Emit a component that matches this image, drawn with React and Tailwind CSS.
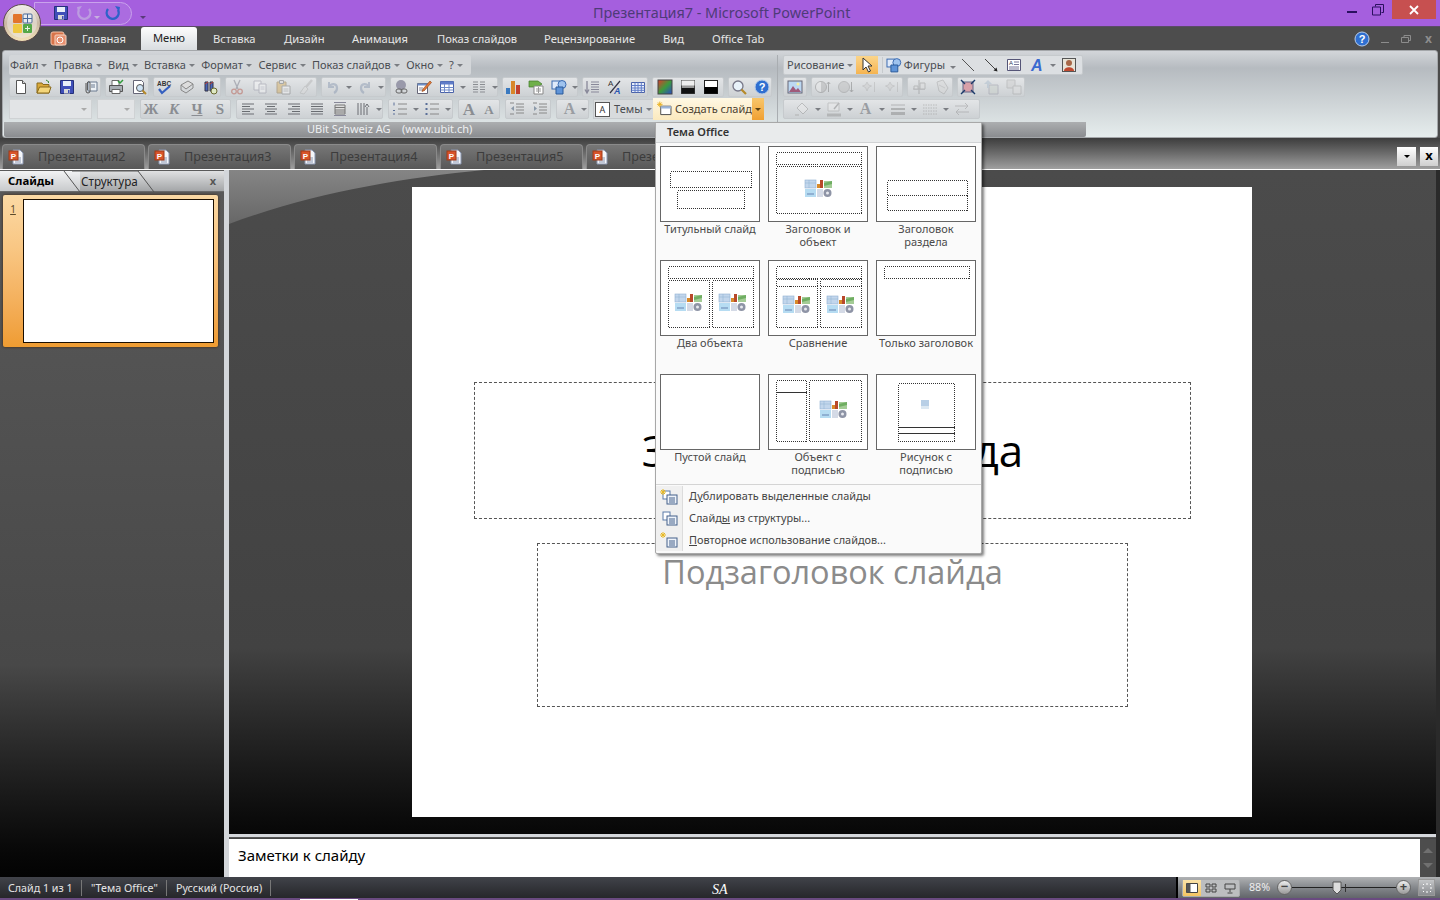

import React from "react";

const S = ({ children, off, w = 16, h = 16 }) => (
    <svg viewBox={`0 0 ${w} ${h}`} width={w} height={h} className={off ? "opacity-40" : ""}>{children}</svg>
);

const icons = {
    doc: <><path d="M3.5 1.5h6l3 3v10h-9z" fill="#fff" stroke="#555" /><path d="M9.5 1.5v3h3" fill="#ddd" stroke="#555" /></>,
    open: <><path d="M1 4h5l1 1.5h6V14H1z" fill="#d9a93a" stroke="#8a6a1c" /><path d="M1 14l2.5-6H15l-2 6z" fill="#f4d67a" stroke="#8a6a1c" /><path d="M10 1l3 2-1 1" fill="none" stroke="#3b8a3b" /></>,
    save: <><path d="M1.5 1.5h13v13h-13z" fill="#3f4fb8" stroke="#25307a" /><path d="M4 2h8v5H4z" fill="#e8eef8" /><path d="M5 10h6v4.5H5z" fill="#d8d8d8" /><path d="M9 11h1.5v3H9z" fill="#3f4fb8" /></>,
    mailclip: <><path d="M6 3h9v9H6z" fill="#eef2f6" stroke="#6a7a90" /><path d="M9 6h4M9 8h4" stroke="#6a7a90" /><path d="M4 4v8a2 2 0 0 0 4 0V4a1.3 1.3 0 0 0-2.6 0v7" fill="none" stroke="#555" /></>,
    print: <><path d="M4 1.5h7v5H4z" fill="#fff" stroke="#666" /><path d="M1.5 6.5h13v6h-13z" fill="#a8adb3" stroke="#555" /><path d="M4 10.5h8v4H4z" fill="#fff" stroke="#666" /><path d="M10 2l2 2 3-3" fill="none" stroke="#2f9a3a" strokeWidth="1.5" /></>,
    preview: <><path d="M2.5 1.5h8l2 2v11h-10z" fill="#fff" stroke="#667" /><circle cx="9" cy="9" r="3.5" fill="#cfe4f6" stroke="#555" /><path d="M11.5 11.5l3.5 3.5" stroke="#b58a2a" strokeWidth="2" /></>,
    spell: <><text x="1" y="7" fontSize="6.5" fontWeight="700" fill="#333" fontFamily="Liberation Sans, sans-serif">ABC</text><path d="M3 10l3 4 8-7" fill="none" stroke="#3560c0" strokeWidth="2.2" /></>,
    book: <><path d="M2 6l7-4 5 3-7 5z" fill="#ddd" stroke="#888" /><path d="M2 6v5l5 3 7-5V5" fill="none" stroke="#888" /></>,
    binoc: <><path d="M3 3h3v9H3zM8 3h3v9H8z" fill="#4a66b8" stroke="#334" /><path d="M3 5l3-2M8 5l3-2" stroke="#c04030" /><circle cx="12" cy="12" r="3" fill="#dfe9c4" stroke="#6a6a30" /></>,
    cut: <><path d="M5 1l4 9M11 1L7 10" stroke="#667" strokeWidth="1.3" /><circle cx="5" cy="12.5" r="2.3" fill="none" stroke="#b04030" strokeWidth="1.3" /><circle cx="11" cy="12.5" r="2.3" fill="none" stroke="#b04030" strokeWidth="1.3" /></>,
    copy: <><path d="M2 2h7v9H2z" fill="#fff" stroke="#889" /><path d="M7 5h7v9H7z" fill="#fff" stroke="#889" /><path d="M8.5 8h4M8.5 10h4" stroke="#aab" /></>,
    paste: <><path d="M2 3h9v11H2z" fill="#d6a545" stroke="#80602a" /><path d="M4.5 1.5h4v3h-4z" fill="#ddd" stroke="#555" /><path d="M7 7h8v8H7z" fill="#fff" stroke="#666" /><path d="M8.5 10h5M8.5 12h5" stroke="#999" /></>,
    brush: <><path d="M14 1L8 8" stroke="#aaa" strokeWidth="2.5" /><path d="M7 7l3 3-4 5-4-1z" fill="#ddd" stroke="#aaa" /></>,
    undo: <><path d="M4 3v5h5" fill="none" stroke="#7b8ca8" strokeWidth="2" /><path d="M4 8c2-4 8-4 8 1 0 2-1 4-3 5" fill="none" stroke="#7b8ca8" strokeWidth="2.2" /></>,
    redo: <><path d="M12 3v5H7" fill="none" stroke="#7b8ca8" strokeWidth="2" /><path d="M12 8C10 4 4 4 4 9c0 2 1 4 3 5" fill="none" stroke="#7b8ca8" strokeWidth="2.2" /></>,
    qatUndo: <><path d="M13 4a6 6 0 1 1-10 1" fill="none" stroke="#bc9ce0" strokeWidth="2.4" /><path d="M6 1L1 2l1 5z" fill="#bc9ce0" /></>,
    qatRedo: <><path d="M3 4a6 6 0 1 0 10 1" fill="none" stroke="#2f62c8" strokeWidth="2.4" /><path d="M10 1l5 1-1 5z" fill="#2f62c8" /></>,
    link: <><circle cx="8" cy="6" r="5" fill="#99a" /><rect x="3" y="10" width="6" height="4" rx="2" fill="none" stroke="#666" /><rect x="8" y="10" width="6" height="4" rx="2" fill="none" stroke="#666" /></>,
    edit: <><path d="M1.5 4.5h10v10h-10z" fill="#fff" stroke="#667" /><path d="M1.5 4.5h10v2h-10z" fill="#6f90c8" /><path d="M3 9h4M3 11h6" stroke="#889" /><path d="M7 10l7-8 1.5 1.5-7 8-2.5 1z" fill="#e07a3a" stroke="#904010" strokeWidth=".6" /></>,
    table: <><path d="M1.5 2.5h13v11h-13z" fill="#fff" stroke="#4a62a8" /><path d="M1.5 2.5h13v3h-13z" fill="#5f7cc8" /><path d="M1.5 8.5h13M1.5 11h13M5.5 5v8.5M10 5v8.5" stroke="#6f8ac8" /></>,
    cols: <><path d="M2 3h5M2 5.5h5M2 8h5M2 10.5h5M2 13h5M9 3h5M9 5.5h5M9 8h5M9 10.5h5M9 13h5" stroke="#8a8d92" /></>,
    chart: <><path d="M1 9h4v6H1z" fill="#3a7ac0" /><path d="M6 2h4v13H6z" fill="#d8862a" /><path d="M11 6h4v9h-4z" fill="#c04030" /></>,
    sheet: <><path d="M1 2h9l4 3-4 3H1z" fill="#6fb04a" stroke="#3f7a2a" strokeWidth=".7" /><path d="M6 7h9v8H6z" fill="#fff" stroke="#888" /><path d="M8 10h5M8 12h5M10.5 8v6" stroke="#999" /></>,
    shapes: <><rect x="1" y="2" width="8" height="8" fill="#dfeafa" stroke="#3a6ab0" /><circle cx="11" cy="5.5" r="4" fill="#9fc3ee" stroke="#3a6ab0" /><path d="M5 8h7v7H5z" fill="#5f94d8" stroke="#2a5a9a" /></>,
    linespace: <><path d="M3 2v11M1 10.5L3 14l2-3.5" fill="none" stroke="#889" strokeWidth="1.3" /><path d="M7 3h8M7 5.5h8M7 8h8M7 10.5h8M7 13h8" stroke="#889" /></>,
    az: <><text x="1" y="7" fontSize="8" fontFamily="Liberation Sans, sans-serif" fill="#333">A</text><path d="M3 14L13 2" stroke="#334" strokeWidth="1.2" /><text x="7" y="15" fontSize="9" fontWeight="700" fontStyle="italic" fontFamily="Liberation Sans, sans-serif" fill="#2a55b0">A</text></>,
    grid: <><path d="M1.5 3.5h13v10h-13z" fill="#eaf0fa" stroke="#4a62a8" /><path d="M1.5 6.5h13M1.5 9h13M1.5 11.3h13M5 3.5v10M8 3.5v10M11.3 3.5v10" stroke="#5f7cc8" /></>,
    color: <><defs><linearGradient id="cg" x1="0" y1="0" x2="1" y2="1"><stop offset="0" stopColor="#e0392b" /><stop offset=".5" stopColor="#3d9a3d" /><stop offset="1" stopColor="#2a4ac8" /></linearGradient></defs><rect x="1" y="1" width="14" height="14" fill="url(#cg)" stroke="#444" /></>,
    gray: <><rect x="1.5" y="1.5" width="13" height="13" fill="#999" stroke="#444" /><rect x="1.5" y="1.5" width="13" height="5" fill="#eee" /><rect x="1.5" y="9" width="13" height="5.5" fill="#111" /></>,
    bw: <><rect x="1.5" y="1.5" width="13" height="13" fill="#fff" stroke="#222" /><rect x="1.5" y="8" width="13" height="6.5" fill="#000" /></>,
    zoom: <><circle cx="7" cy="7" r="5" fill="#e8f2fa" stroke="#778" strokeWidth="1.3" /><path d="M10.5 10.5L15 15" stroke="#b58a2a" strokeWidth="2.2" /></>,
    help: <><circle cx="8" cy="8" r="7" fill="#2f6fd0" stroke="#b8cdea" /><text x="8" y="12" fontSize="11" fontWeight="700" textAnchor="middle" fontFamily="Liberation Sans, sans-serif" fill="#fff">?</text></>,
    left: <path d="M2 3h12M2 5.5h8M2 8h12M2 10.5h8M2 13h12" stroke="#6a6d72" />,
    center: <path d="M2 3h12M4 5.5h8M2 8h12M4 10.5h8M2 13h12" stroke="#6a6d72" />,
    right: <path d="M2 3h12M6 5.5h8M2 8h12M6 10.5h8M2 13h12" stroke="#6a6d72" />,
    justify: <path d="M2 3h12M2 5.5h12M2 8h12M2 10.5h12M2 13h12" stroke="#6a6d72" />,
    distrib: <><path d="M2 1.5h12M2 14.5h12" stroke="#889" /><path d="M3 4h10v9H3z" fill="#ddd" stroke="#777" /><path d="M3 6.5h10M3 9h10M3 11h10" stroke="#777" /></>,
    vert: <path d="M3 2v12M6 2v12M9 2v12M12 6v8M14 6l-2-3-2 3" fill="none" stroke="#6a6d72" />,
    num: <><path d="M6 3h9M6 8h9M6 13h9" stroke="#888" /><path d="M2 1.5v3M1 9.5h2M1 13h2" stroke="#5a6f98" /></>,
    bull: <><path d="M6 3h9M6 8h9M6 13h9" stroke="#888" /><path d="M1.5 2h2v2h-2zM1.5 7h2v2h-2zM1.5 12h2v2h-2z" fill="#5a6f98" /></>,
    indL: <><path d="M7 3h8M7 6h8M7 9h8M7 12h8" stroke="#888" /><path d="M5 5L2 7.5 5 10z" fill="#8a98a8" /><path d="M1 2h4M1 13h4" stroke="#888" /></>,
    indR: <><path d="M7 3h8M7 6h8M7 9h8M7 12h8" stroke="#888" /><path d="M2 5l3 2.5L2 10z" fill="#8a98a8" /><path d="M1 2h4M1 13h4" stroke="#888" /></>,
    newSlide: <><path d="M4 5h11v9H4z" fill="#fff" stroke="#444" /><path d="M4 5h11v2.5H4z" fill="#9cb5d8" /><path d="M3 0v6M0 3h6M1 1l4 4M5 1L1 5" stroke="#e8b020" /></>,
    cursor: <path d="M4 1l0 12 3-3 2.5 5 2-1-2.5-5h4z" fill="#fff" stroke="#333" />,
    line: <path d="M2 2l12 12" stroke="#555" />,
    arrowLine: <><path d="M2 2l11 11" stroke="#444" /><path d="M14.5 14.5l-4-1 3-3z" fill="#222" /></>,
    textbox: <><path d="M1.5 2.5h13v11h-13z" fill="#fff" stroke="#557" /><text x="3" y="8" fontSize="6" fill="#335" fontFamily="Liberation Sans, sans-serif">A</text><path d="M8 5h5M8 7.5h5M3 10h10M3 12h10" stroke="#779" /></>,
    wordart: <><text x="2" y="14" fontSize="16" fontWeight="700" fontStyle="italic" fontFamily="Liberation Sans, sans-serif" fill="#3a6ad0">A</text></>,
    clipart: <><rect x="1.5" y="1.5" width="13" height="13" fill="#e8e4d8" stroke="#555" /><circle cx="8" cy="6" r="3" fill="#a86848" /><path d="M3 14c0-5 10-5 10 0z" fill="#c04a30" /></>,
    picture: <><rect x="1" y="2" width="14" height="12" fill="#bcd8f2" stroke="#667" /><path d="M2 13l4-6 3 4 2-2 3 4z" fill="#a05a7a" /><circle cx="11" cy="5" r="1.5" fill="#f4f0a0" /></>,
    circUp: <><circle cx="6" cy="8" r="5.5" fill="#aaa" stroke="#777" /><path d="M6 3a5 5 0 0 0 0 10z" fill="#eee" /><path d="M13.5 13V3M11.8 5l1.7-2 1.7 2" fill="none" stroke="#666" /></>,
    circDn: <><circle cx="6" cy="8" r="5.5" fill="#b8b8b8" stroke="#888" /><path d="M13.5 3v10M11.8 11l1.7 2 1.7-2" fill="none" stroke="#666" /></>,
    spark: <><path d="M6 3l1.5 3 3 1-3 1.5L6 12l-1.5-3.5-3-1.5 3-1z" fill="#ccc" stroke="#aaa" /><path d="M13.5 13V3" stroke="#aaa" /></>,
    align: <><path d="M8 1v14M2 10h12" stroke="#777" /><path d="M3 7h4v3H3zM9 4h5v6H9z" fill="#ddd" stroke="#888" /></>,
    hand: <><path d="M3 3l6-2 5 8-4 6-5-3z" fill="#d8d8d8" stroke="#999" /><path d="M5 6l6 3" stroke="#aaa" /></>,
    crop: <><path d="M3 3h10v10H3z" fill="#d8a0a8" stroke="#668" /><path d="M1 1l4 4M15 1l-4 4M1 15l4-4M15 15l-4-4" stroke="#1a3a6a" strokeWidth="1.4" /></>,
    back: <><path d="M6 6h9v9H6z" fill="#c8d0c8" stroke="#889" /><path d="M5 1L1 5h3v4h2V5h3z" fill="#9fb4c8" /></>,
    stack: <><path d="M1 1h8v8H1z" fill="#ccc" stroke="#999" /><path d="M7 7h8v8H7z" fill="#ddd" stroke="#999" /></>,
    fill: <><path d="M3 7l5-5 6 6-5 5z" fill="#eee" stroke="#888" /><path d="M1 14h4" stroke="#aaa" strokeWidth="2" /></>,
    pen: <><path d="M2 2h11v8H2z" fill="#eee" stroke="#999" /><path d="M8 8l5-6" stroke="#777" strokeWidth="1.5" /><path d="M1 12.5h14v3H1z" fill="#888" /></>,
    thick: <><path d="M1 4h14" stroke="#777" /><path d="M1 8h14" stroke="#777" strokeWidth="2" /><path d="M1 12.5h14" stroke="#777" strokeWidth="3" /></>,
    dash: <path d="M1 4h14M1 7h14M1 10h14M1 13h14" stroke="#888" strokeDasharray="1.5 1" />,
    swap: <><path d="M1 5h13M11 2l3 3-3 3" fill="none" stroke="#888" /><path d="M15 11H2M5 8l-3 3 3 3" fill="none" stroke="#888" /></>,
};

const Down = ({ c = "border-t-[#7a7d82]" }) => (
    <span className={`inline-block w-0 h-0 border-x-[3px] border-x-transparent border-t-[3px] ${c}`} />
);

// one toolbar cell, "v" marks a small drop arrow
const Cell = ({ n, off }) => n === "v" ? (
    <span className="w-[9px] flex items-center justify-center shrink-0"><Down /></span>
) : (
    <span className="w-[23px] flex items-center justify-center shrink-0"><S off={off}>{icons[n]}</S></span>
);

const Group = ({ className = "", items = [], off, children }) => (
    <div className={`h-full flex items-center justify-center rounded-[2px] border border-[#c6cacd] bg-gradient-to-b from-[#e3e5e7] to-[#cdd1d4] shrink-0 ${className}`}>
        {items.map((n, i) => <Cell key={i} n={n} off={off} />)}
        {children}
    </div>
);

const Fmt = ({ children, className = "" }) => (
    <span className={`w-[23px] text-center text-[15px] leading-none font-bold text-[#8a8d92] shrink-0 ${className}`}>{children}</span>
);

const menus = ["Файл", "Правка", "Вид", "Вставка", "Формат", "Сервис", "Показ слайдов", "Окно", "?"];
const ribbonTabs = ["Вставка", "Дизайн", "Анимация", "Показ слайдов", "Рецензирование", "Вид", "Office Tab"];
const docs = ["Презентация2", "Презентация3", "Презентация4", "Презентация5", "Презентация6"];

const PptIcon = () => (
    <svg viewBox="0 0 16 16" width="16" height="16">
        <path d="M5 1h7l3 3v11H5z" fill="#f4f6fa" stroke="#8a96b0" />
        <path d="M7 9h6M7 11h6M7 13h6" stroke="#8a96b0" />
        <rect x="1" y="2" width="9" height="9" fill="#d8542a" stroke="#a03a18" />
        <text x="5.5" y="9.5" fontSize="8" fontWeight="700" textAnchor="middle" fill="#fff" fontFamily="Liberation Sans, sans-serif">P</text>
    </svg>
);

const OfficeButton = () => (
    <svg viewBox="0 0 40 40" width="40" height="40" className="absolute left-[2px] top-[3px] z-30">
        <defs>
            <linearGradient id="ob" x1="0" y1="0" x2="0" y2="1">
                <stop offset="0" stopColor="#f4f0ee" /><stop offset=".5" stopColor="#c9b8a4" /><stop offset="1" stopColor="#f3e2b8" />
            </linearGradient>
        </defs>
        <circle cx="20" cy="20" r="18.5" fill="url(#ob)" stroke="#5b4a4a" />
        <circle cx="20" cy="20" r="15" fill="#f0ece6" opacity=".5" />
        <rect x="11" y="11" width="9" height="9" rx="1" fill="#e2752c" />
        <rect x="21" y="11" width="9" height="9" rx="1" fill="#e8ebef" stroke="#4a6a9a" />
        <path d="M21 15.5h9M25.5 11v9" stroke="#4a6a9a" />
        <rect x="11" y="21" width="9" height="9" rx="1" fill="#efc840" />
        <rect x="21" y="21" width="9" height="9" rx="1" fill="#54a848" />
        <path d="M23 25.5h5M25.5 23v5" stroke="#e8f4e0" />
    </svg>
);

// small picture of the content placeholder used by the layout thumbnails
const Placeholder = ({ x, y, small }) => small ? (
    <g transform={`translate(${x} ${y})`}>
        <rect width="8" height="9" fill="#b8cfe6" />
        <rect y="6" width="8" height="3" fill="#dce8f2" />
    </g>
) : (
    <g transform={`translate(${x} ${y})`}>
        <rect width="11" height="8" fill="#c2d6ec" stroke="#8fb0d2" strokeWidth=".6" />
        <path d="M0 3h11M4 0v8" stroke="#8fb0d2" strokeWidth=".5" />
        <path d="M12 4h3v4h-3z" fill="#d88a2a" /><path d="M15 0h3v8h-3z" fill="#b8482a" />
        <path d="M19 1h8v7h-8z" fill="#a4cc96" /><path d="M19 3l8-2v3l-8 2z" fill="#6fae62" />
        <rect y="9" width="11" height="8" fill="#b6dcf2" />
        <rect x="2" y="13" width="7" height="2" fill="#8fb0d2" />
        <rect x="12" y="9" width="6" height="8" fill="#d4dae6" />
        <circle cx="22.5" cy="13" r="4" fill="#8e94a6" />
        <circle cx="22.5" cy="13" r="1.5" fill="#e8eaf0" />
    </g>
);

const D = ({ x, y, w, h }) => (
    <rect x={x + .5} y={y + .5} width={w} height={h} fill="none" stroke="#333" strokeWidth="1" strokeDasharray="1 1" shapeRendering="crispEdges" />
);

const layouts = [
    { t: "Титульный слайд", b: <><D x={10} y={25} w={81} h={16} /><D x={17} y={44} w={67} h={18} /></> },
    { t: "Заголовок и объект", b: <><D x={8} y={6} w={85} h={12} /><D x={8} y={20} w={85} h={47} /><Placeholder x={37} y={34} /></> },
    { t: "Заголовок раздела", b: <><D x={11} y={34} w={80} h={15} /><D x={11} y={49} w={80} h={15} /></> },
    { t: "Два объекта", b: <><D x={8} y={6} w={85} h={12} /><D x={8} y={20} w={41} h={47} /><D x={52} y={20} w={41} h={47} /><Placeholder x={15} y={34} /><Placeholder x={59} y={34} /></> },
    { t: "Сравнение", b: <><D x={8} y={6} w={85} h={12} /><D x={8} y={19} w={41} h={7} /><D x={52} y={19} w={41} h={7} /><D x={8} y={26} w={41} h={41} /><D x={52} y={26} w={41} h={41} /><Placeholder x={15} y={36} /><Placeholder x={59} y={36} /></> },
    { t: "Только заголовок", b: <D x={8} y={6} w={85} h={12} /> },
    { t: "Пустой слайд", b: null },
    { t: "Объект с подписью", b: <><D x={8} y={6} w={30} h={12} /><D x={8} y={18} w={30} h={49} /><D x={41} y={6} w={52} h={61} /><Placeholder x={52} y={27} /></> },
    { t: "Рисунок с подписью", b: <><D x={22} y={9} w={56} h={44} /><D x={22} y={53} w={56} h={6} /><D x={22} y={59} w={56} h={8} /><Placeholder x={45} y={26} small /></> },
];

const menuRows = [
    { i: "a", t: <>Д<u>у</u>блировать выделенные слайды</> },
    { i: "b", t: <>Слайд<u>ы</u> из структуры...</> },
    { i: "c", t: <><u>П</u>овторное использование слайдов...</> },
];

const MenuIcon = ({ k }) => (
    <svg viewBox="0 0 18 16" width="18" height="16">
        {k !== "c" && <rect x="3" y="2" width="7" height="8" fill="#fff" stroke="#5a7aa8" />}
        <rect x="7" y="6" width="10" height="9" fill="#eef3fa" stroke="#44608a" />
        <path d="M9 9h6M9 11h6M9 13h6" stroke="#44608a" />
        {k !== "b" && <path d="M3 0v6M0 3h6M1 1l4 4M5 1L1 5" stroke="#e8b820" />}
    </svg>
);

const NewSlideMenu = () => (
    <div className="absolute left-[655px] top-[122px] w-[327px] h-[432px] z-20 bg-[#fafafa] border border-[#a8a8a8] rounded-[2px] shadow-[2px_2px_3px_rgba(0,0,0,0.5)] flex flex-col font-['Noto_Sans',sans-serif]">
        <div className="h-[20px] shrink-0 bg-[#e9ebec] border-b border-[#d0d2d4] pl-[11px] text-[11px] leading-[17px] font-semibold text-[#333]">Тема Office</div>
        <div className="grid grid-cols-[100px_100px_100px] gap-x-[8px] grid-rows-[114px_114px_110px] pl-[4px] pt-[3px] h-[341px] shrink-0">
            {layouts.map((l) => (
                <div key={l.t} className="flex flex-col items-center">
                    <div className="w-[100px] h-[76px] bg-white border border-[#666] shrink-0">
                        <svg viewBox="1 1 98 74" width="98" height="74" className="block">{l.b}</svg>
                    </div>
                    <div className="w-[100px] text-center text-[11px] leading-[13px] text-[#4a4a4a]">{l.t}</div>
                </div>
            ))}
        </div>
        <div className="flex-1 border-t border-[#d4d4d4] flex flex-col">
            {menuRows.map((r, i) => (
                <div key={r.i} className={`h-[22px] flex items-center ${i === 0 ? "pt-[1px]" : ""}`}>
                    <span className="w-[27px] h-full flex items-center justify-center bg-[#f0f0f0] border-r border-[#dcdcdc] shrink-0"><MenuIcon k={r.i} /></span>
                    <span className="ml-[6px] text-[10.9px] text-[#444]">{r.t}</span>
                </div>
            ))}
        </div>
    </div>
);

const Ribbon = () => (
    <div className="h-[88px] mx-[2px] shrink-0 rounded-[3px] border border-[#a4a7aa] bg-gradient-to-b from-[#d3d6da] via-[#b6bbc0] via-[20%] to-[#e6eded] font-['Noto_Sans',sans-serif] text-[11px] text-[#4a4d52] flex flex-col">
        <div className="w-[1084px] h-[71px] flex pt-[4px]">
            <div className="w-[775px] border-r border-[#a9adb1] pl-[6px] flex flex-col shrink-0">
                <div className="h-[20px] w-[462px] flex items-center gap-[6.4px] bg-[#d3d6d9] rounded-[2px] pl-[1px]">
                    {menus.map((m) => (
                        <span key={m} className="flex items-center gap-[3px] whitespace-nowrap">{m}<Down /></span>
                    ))}
                </div>
                <div className="h-[22px] mt-[1px] flex gap-[4px] py-[1px]">
                    <Group className="w-[92px]" items={["doc", "open", "save", "mailclip"]} />
                    <Group className="w-[44px]" items={["print", "preview"]} />
                    <Group className="w-[68px]" items={["spell", "book", "binoc"]} />
                    <Group className="w-[92px]" items={["cut", "copy", "paste", "brush"]} off />
                    <Group className="w-[65px]" items={["undo", "v", "redo", "v"]} off />
                    <Group className="w-[108px]" items={["link", "edit", "table", "v", "cols", "v"]} />
                    <Group className="w-[76px]" items={["chart", "sheet", "shapes", "v"]} />
                    <Group className="w-[66px]" items={["linespace", "az", "grid"]} />
                    <Group className="w-[72px]" items={["color", "gray", "bw"]} />
                    <Group className="w-[44px]" items={["zoom", "help"]} />
                </div>
                <div className="h-[22px] flex gap-[5px] py-[1px]">
                    <div className="w-[83px] h-full bg-[#e2e4e6] border border-[#cfd2d4] flex items-center justify-end pr-[4px]"><Down c="border-t-[#aaa]" /></div>
                    <div className="w-[38px] h-full bg-[#e2e4e6] border border-[#cfd2d4] flex items-center justify-end pr-[4px]"><Down c="border-t-[#aaa]" /></div>
                    <Group className="w-[91px] font-['Liberation_Serif',serif]">
                        <Fmt>Ж</Fmt><Fmt className="italic">К</Fmt><Fmt className="underline">Ч</Fmt><Fmt>S</Fmt>
                    </Group>
                    <Group className="w-[147px]" items={["left", "center", "right", "justify", "distrib", "vert", "v"]} />
                    <Group className="w-[65px]" items={["num", "v", "bull", "v"]} />
                    <Group className="w-[42px]">
                        <span className="font-['Liberation_Serif',serif] font-bold text-[17px] leading-none text-[#8a8d92] w-[20px] text-center">A</span>
                        <span className="font-['Liberation_Serif',serif] font-bold text-[13px] leading-none text-[#8a8d92] w-[20px] text-center">A</span>
                    </Group>
                    <Group className="w-[46px]" items={["indL", "indR"]} />
                    <Group className="w-[33px]">
                        <span className="font-['Liberation_Serif',serif] font-bold text-[16px] leading-none text-[#9a9da2] w-[22px] text-center">A</span><Down />
                    </Group>
                    <div className="h-[22px] flex items-center ml-[-1px] -mt-[1px]">
                        <div className="w-[60px] h-[20px] flex items-center gap-[4px] pl-[1px] border border-[#c6cacd] bg-[#d8dbdd] border-r-0">
                            <span className="w-[15px] h-[15px] bg-white border border-[#555] text-[9px] leading-[13px] text-center text-[#333] shrink-0">A</span>
                            <span className="flex items-center gap-[3px]">Темы<Down /></span>
                        </div>
                        <div className="w-[99px] h-[22px] flex items-center gap-[3px] pl-[4px] bg-gradient-to-b from-[#fff8e4] to-[#fbe9bd] text-[#4a4030]">
                            <S>{icons.newSlide}</S><span className="whitespace-nowrap">Создать слайд</span>
                        </div>
                        <div className="w-[12px] h-[22px] flex items-center justify-center bg-gradient-to-b from-[#f8c66a] to-[#f0a030]"><Down c="border-t-[#5a4010]" /></div>
                    </div>
                </div>
            </div>
            <div className="flex-1 pl-[5px] flex flex-col">
                <div className="h-[20px] w-[300px] flex items-center bg-[#dcdfe2] rounded-[2px] border border-[#c6cacd]">
                    <span className="flex items-center gap-[3px] w-[72px] pl-[3px]">Рисование<Down /></span>
                    <span className="w-[22px] h-full flex items-center justify-center bg-gradient-to-b from-[#fbd58a] to-[#f5b450] shrink-0"><S>{icons.cursor}</S></span>
                    <span className="w-[74px] flex items-center gap-[2px] pl-[3px] border-l border-[#c6cacd] ml-[4px]"><S>{icons.shapes}</S>Фигуры<span className="ml-[3px]"><Down /></span></span>
                    <Cell n="line" /><Cell n="arrowLine" /><Cell n="textbox" /><Cell n="wordart" /><Cell n="v" /><Cell n="clipart" />
                </div>
                <div className="h-[22px] mt-[1px] flex gap-[4px] py-[1px]">
                    <Group className="w-[24px]" items={["picture"]} />
                    <Group className="w-[92px]" items={["circUp", "circDn", "spark", "spark"]} off />
                    <Group className="w-[46px]" items={["align", "hand"]} off />
                    <Group className="w-[68px]">
                        <Cell n="crop" /><Cell n="back" off /><Cell n="stack" off />
                    </Group>
                </div>
                <div className="h-[22px] flex py-[1px]">
                    <Group className="w-[197px]">
                        <Cell n="fill" off /><Cell n="v" />
                        <Cell n="pen" off /><Cell n="v" />
                        <span className="w-[23px] text-center font-['Liberation_Serif',serif] font-bold text-[16px] leading-none text-[#9a9da2]">A</span><Cell n="v" />
                        <Cell n="thick" off /><Cell n="v" />
                        <Cell n="dash" off /><Cell n="v" />
                        <Cell n="swap" off />
                    </Group>
                </div>
            </div>
        </div>
        <div className="w-[1082px] h-[15px] ml-[1px] bg-gradient-to-b from-[#acaeb0] to-[#8b8d90] rounded-b-[2px] pl-[303px] text-[11px] leading-[14px] text-[#eef0f2] whitespace-pre">UBit Schweiz AG    (www.ubit.ch)</div>
    </div>
);

const SidePane = () => (
    <aside className="w-[224px] shrink-0 bg-gradient-to-b from-[#5a5a5a] via-[#484848] via-[70%] to-[#030303] flex flex-col">
        <div className="h-[21px] mt-[1px] shrink-0 relative bg-gradient-to-b from-[#e0e1e2] to-[#a4a6a8] border-b border-[#6a6a6a] font-['Noto_Sans',sans-serif] text-[11.7px] leading-[20px] text-[#222] flex">
            <span className="pl-[8px] w-[80px] text-[11.4px] font-bold text-black bg-gradient-to-b from-[#f2f3f4] to-[#c8cacc]">Слайды</span>
            <span className="pl-[1px]">Структура</span>
            <svg viewBox="0 0 224 21" className="absolute inset-0 w-[224px] h-[21px]">
                <path d="M64 0l16 21" stroke="#555" fill="none" />
                <path d="M72 0h66l16 21" stroke="#555" fill="none" />
            </svg>
            <span className="absolute right-[8px] top-0 text-[11px] font-bold text-[#555]">x</span>
        </div>
        <div className="mt-[3px] ml-[3px] w-[215px] h-[152px] rounded-[2px] bg-gradient-to-b from-[#fbd9a4] via-[#f9c784] via-[34%] to-[#ef9c31] shadow-[0_0_3px_rgba(60,30,0,0.9)] flex pt-[4px]">
            <span className="w-[20px] text-center text-[10px] leading-[20px] text-[#5a4a2a] shrink-0 font-['Noto_Sans',sans-serif] underline">1</span>
            <div className="w-[191px] h-[144px] bg-white border-[1.5px] border-[#1a0e00]" />
        </div>
    </aside>
);

const Slide = () => (
    <div className="relative z-10 w-[840px] h-[630px] ml-[183px] mt-[17px] bg-white font-['Open_Sans',sans-serif] shrink-0 overflow-hidden">
        <div className="w-[717px] h-[137px] mt-[195px] ml-[62px] border border-dashed border-[#555] flex items-center justify-center text-[44px] leading-none pb-[2px] text-black">
            Заголовок слайда
        </div>
        <div className="w-[591px] h-[164px] mt-[24px] ml-[125px] border border-dashed border-[#555] text-center text-[32.5px] leading-[56px] text-[#8b8b8b]">
            Подзаголовок слайда
        </div>
    </div>
);

export default function App() {
    return (
        <div className="relative w-[1440px] h-[900px] overflow-hidden flex flex-col bg-[#4b4b4b] font-['Noto_Sans',sans-serif]">
            <OfficeButton />

            {/* title bar */}
            <header className="h-[26px] shrink-0 bg-[#a55fde] relative flex items-center">
                <div className="ml-[34px] w-[98px] h-[23px] rounded-r-[12px] border border-[#c9a2ec] bg-[#ab6ce0] flex items-center pl-[18px]">
                    <S>{icons.save}</S>
                    <span className="ml-[7px]"><S>{icons.qatUndo}</S></span>
                    <span className="ml-[2px]"><Down c="border-t-[#c8b0e0]" /></span>
                    <span className="ml-[5px]"><S>{icons.qatRedo}</S></span>
                </div>
                <span className="ml-[8px]"><Down c="border-t-[#5a3a7a]" /></span>
                <span className="absolute left-[593px] top-[3px] text-[14.4px] leading-[20px] text-[#4e3b78] whitespace-nowrap">Презентация7 - Microsoft PowerPoint</span>
                <div className="ml-auto flex items-start h-full">
                    <span className="w-[10px] h-[2px] bg-[#2a1060] mt-[11px] mr-[15px]" />
                    <svg viewBox="0 0 12 12" width="12" height="12" className="mt-[4px] mr-[8px]"><path d="M3.5 2.5V.5h8v8h-2M.5 3h8v8h-8z" fill="none" stroke="#2a1060" /></svg>
                    <span className="w-[44px] h-[19px] bg-[#c75050] mr-[4px] flex items-center justify-center">
                        <svg viewBox="0 0 10 10" width="10" height="10"><path d="M1 1l8 8M9 1l-8 8" stroke="#fff" strokeWidth="1.8" /></svg>
                    </span>
                </div>
            </header>

            {/* ribbon tabs */}
            <nav className="h-[24px] shrink-0 bg-[#4d4d4d] border-t border-[#5c4a68] flex items-end text-[11.2px] leading-[22px] text-[#e6e6e6] relative">
                <span className="w-[74px] h-[22px] flex items-center justify-end pr-[6px] shrink-0">
                    <svg viewBox="0 0 18 18" width="18" height="18"><rect x="1" y="2" width="13" height="13" rx="2" fill="#d8744a" stroke="#f4c0a4" /><rect x="5" y="5" width="11" height="10" rx="1" fill="#e89070" stroke="#f8d4c0" /><circle cx="10" cy="10" r="3" fill="none" stroke="#fff" /></svg>
                </span>
                <span className="ml-[8px] w-[59px]">Главная</span>
                <span className="w-[56px] h-[23px] text-center text-[#222] rounded-t-[3px] bg-gradient-to-b from-[#fdfdfd] to-[#d9dde0]">Меню</span>
                <span className="ml-[16px] w-[71px]">{ribbonTabs[0]}</span>
                <span className="w-[68px]">{ribbonTabs[1]}</span>
                <span className="w-[85px]">{ribbonTabs[2]}</span>
                <span className="w-[107px]">{ribbonTabs[3]}</span>
                <span className="w-[119px]">{ribbonTabs[4]}</span>
                <span className="w-[49px]">{ribbonTabs[5]}</span>
                <span>{ribbonTabs[6]}</span>
                <div className="ml-auto mr-[7px] flex items-center h-[22px] text-[#8c8c8c]">
                    <S>{icons.help}</S>
                    <span className="ml-[11px] w-[8px] h-[1px] bg-[#8c8c8c] mt-[6px]" />
                    <svg viewBox="0 0 10 8" width="10" height="8" className="ml-[12px]"><path d="M.5 2.5h7v5h-7zM3 2.5V.5h6.5v5H8" fill="none" stroke="#8c8c8c" /></svg>
                    <span className="ml-[14px] w-[8px] text-[12px] font-bold leading-none">x</span>
                </div>
            </nav>

            <Ribbon />

            {/* document tabs */}
            <div className="h-[32px] shrink-0 bg-gradient-to-b from-[#3d3d3d] to-[#a0a0a0] border-b border-white flex items-end pl-[2px] gap-[3px] text-[12.6px] text-[#3c3c3c]">
                {docs.map((d) => (
                    <div key={d} className="w-[143px] h-[25px] rounded-t-[4px] border border-b-0 border-[#8a8a8a] bg-gradient-to-b from-[#777] to-[#585858] flex items-center pl-[5px] gap-[14px] shrink-0 whitespace-nowrap overflow-hidden">
                        <PptIcon />{d}
                    </div>
                ))}
                <div className="ml-auto flex gap-[4px] mb-[3px] mr-[2px]">
                    <span className="w-[19px] h-[19px] bg-gradient-to-b from-white to-[#cfcfcf] flex items-center justify-center"><Down c="border-t-black" /></span>
                    <span className="w-[18px] h-[19px] bg-gradient-to-b from-white to-[#cfcfcf] text-center text-[13px] leading-[16px] font-bold text-black">x</span>
                </div>
            </div>

            {/* work area */}
            <div className="flex-1 min-h-0 flex">
                <SidePane />
                <div className="w-[5px] shrink-0 bg-[#d3d6da]" />
                <main className="w-[1207px] shrink-0 flex flex-col">
                    <div className="relative flex-1 min-h-0 bg-gradient-to-b from-[#4b4b4b] via-[#424242] via-[72%] to-[#070707] overflow-hidden">
                        <svg viewBox="0 0 260 56" width="260" height="56" className="absolute left-0 top-0">
                            <defs><linearGradient id="sw" x1="0" y1="0" x2="0" y2="1"><stop offset="0" stopColor="#858585" /><stop offset="1" stopColor="#676767" /></linearGradient></defs>
                            <path d="M0 0h255C170 8 80 24 0 54z" fill="url(#sw)" />
                        </svg>
                        <Slide />
                    </div>
                    <div className="h-[4px] shrink-0 bg-[#d5d8dc] border-b border-[#555]" />
                    <div className="h-[39px] shrink-0 flex border-t border-[#444] box-border">
                        <div className="w-[1191px] bg-white pl-[9px] pt-[5px] text-[15px] leading-[22px] text-black">Заметки к слайду</div>
                        <div className="w-[16px] bg-[#4d4d4d] flex flex-col justify-between items-center py-[9px]">
                            <span className="w-0 h-0 border-x-[5px] border-x-transparent border-b-[5px] border-b-[#707070]" />
                            <span className="w-0 h-0 border-x-[5px] border-x-transparent border-t-[5px] border-t-[#707070]" />
                        </div>
                    </div>
                </main>
                <div className="flex-1 bg-[#2a2a2a]" />
            </div>

            {/* status bar */}
            <footer className="relative h-[23px] shrink-0 bg-gradient-to-b from-[#41434a] to-[#26272a] border-b-2 border-[#6a4a80] flex items-center text-[10.7px] text-[#e4e4e4]">
                <span className="w-[82px] pl-[8px] border-r border-[#777] h-[16px] leading-[16px]">Слайд 1 из 1</span>
                <span className="w-[85px] pl-[9px] border-r border-[#777] h-[16px] leading-[16px]">"Тема Office"</span>
                <span className="w-[104px] pl-[9px] border-r border-[#777] h-[16px] leading-[16px]">Русский (Россия)</span>
                <span className="ml-[441px] mt-[3px] w-[20px] font-['Liberation_Serif',serif] italic text-[14px] text-white">SA</span>
                <div className="ml-auto w-[264px] h-[21px] border-l-2 border-black bg-gradient-to-b from-[#b0b2b4] via-[#85888c] to-[#62656a] flex items-center">
                    <div className="ml-[4px] h-[18px] flex rounded-[2px] border border-[#a8aaac] bg-[#bcbec0]">
                        <span className="w-[18px] flex items-center justify-center bg-gradient-to-b from-[#fbe3a8] to-[#f5c560]">
                            <svg viewBox="0 0 12 12" width="12" height="12"><path d="M.5 1.5h11v9H.5z" fill="#fff" stroke="#444" /><path d="M.5 1.5h4v9h-4z" fill="#555" /></svg>
                        </span>
                        <span className="w-[19px] flex items-center justify-center">
                            <svg viewBox="0 0 12 12" width="12" height="12"><path d="M1 2h4v3H1zM7 2h4v3H7zM1 7h4v3H1zM7 7h4v3H7z" fill="none" stroke="#444" /></svg>
                        </span>
                        <span className="w-[19px] flex items-center justify-center">
                            <svg viewBox="0 0 12 12" width="12" height="12"><path d="M1 2h10v5H1zM6 7v3M3.5 11h5" fill="none" stroke="#444" /></svg>
                        </span>
                    </div>
                    <span className="ml-[9px] w-[28px] text-[#eee]">88%</span>
                    <div className="flex items-center w-[134px] h-[16px] relative">
                        <span className="w-[15px] h-[15px] rounded-full bg-gradient-to-b from-[#eee] to-[#999] border border-[#666] shrink-0 text-center text-[13px] leading-[11px] font-bold text-[#444]">−</span>
                        <span className="flex-1 h-[1px] bg-[#222]" />
                        <span className="w-[15px] h-[15px] rounded-full bg-gradient-to-b from-[#eee] to-[#999] border border-[#666] shrink-0 text-center text-[13px] leading-[11px] font-bold text-[#444]">+</span>
                        <svg viewBox="0 0 10 14" width="10" height="14" className="absolute left-[55px] top-[1px]"><path d="M1 1h8v8l-4 4-4-4z" fill="#ddd" stroke="#555" /></svg>
                        <span className="absolute left-[68px] top-[4px] w-[1px] h-[8px] bg-[#333]" />
                    </div>
                    <span className="ml-[7px] w-[17px] h-[17px] bg-gradient-to-b from-[#c4c6c8] to-[#8a8c90] border border-[#999] flex items-center justify-center">
                        <svg viewBox="0 0 12 12" width="12" height="12"><path d="M6 1v2M6 9v2M1 6h2M9 6h2M2 2l1 1M9 9l1 1M10 2L9 3M2 10l1-1" stroke="#fff" /></svg>
                    </span>
                </div>
                <span className="absolute left-[300px] bottom-[-2px] w-[58px] h-[1px] bg-white" />
            </footer>

            <NewSlideMenu />
        </div>
    );
}
